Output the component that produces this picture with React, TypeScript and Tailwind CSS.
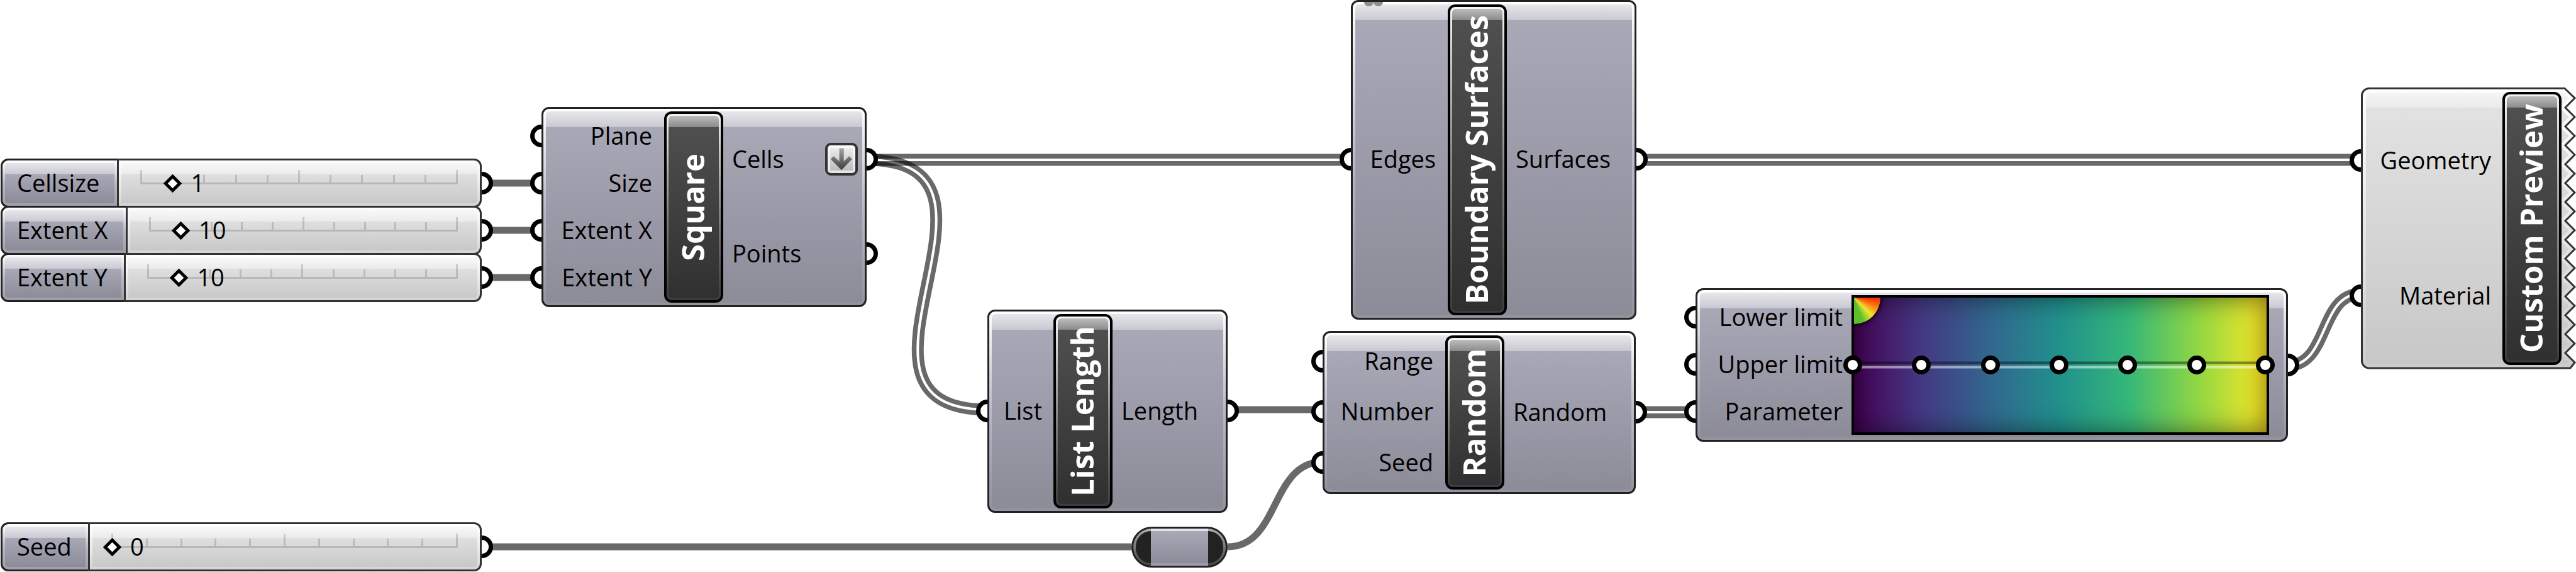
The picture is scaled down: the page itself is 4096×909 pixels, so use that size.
import { useId, useState, type ReactNode } from "react";

const ROW_TEXT = "pb-[2px] text-[38px] leading-none whitespace-nowrap text-black";

/* Half-round connector that sits against the edge of a node. */
function Grip({ side }: { side: "in" | "out" }) {
  return side === "in" ? (
    <span className="absolute top-1/2 right-full mr-[7px] h-[36px] w-[18px] -translate-y-1/2 rounded-l-full border-[7px] border-r-0 border-black bg-white" />
  ) : (
    <span className="absolute top-1/2 left-full ml-[7px] h-[36px] w-[18px] -translate-y-1/2 rounded-r-full border-[7px] border-l-0 border-black bg-white" />
  );
}

function Inputs({ names, className }: { names: string[]; className: string }) {
  return (
    <ul className={`flex flex-col pt-[1px] pb-[3px] ${className}`}>
      {names.map((name) => (
        <li key={name} className="relative flex flex-1 items-center justify-end">
          <Grip side="in" />
          <span className={ROW_TEXT}>{name}</span>
        </li>
      ))}
    </ul>
  );
}

function Outputs({ names, action }: { names: string[]; action?: ReactNode }) {
  return (
    <ul className="flex flex-1 flex-col pt-[1px] pb-[3px]">
      {names.map((name, i) => (
        <li key={name} className="relative flex flex-1 items-center justify-between pr-[7px] pl-[14px]">
          <span className={ROW_TEXT}>{name}</span>
          {i === 0 && action}
          <Grip side="out" />
        </li>
      ))}
    </ul>
  );
}

function Title({ children }: { children: string }) {
  return (
    <h2 className="flex w-[94px] shrink-0 rounded-[12px] border-4 border-black bg-linear-to-b from-[#f4f4f4] via-[#8a8a8a] to-[#3c3c3c] p-[3px]">
      <span className="flex flex-1 items-center justify-center rounded-[6px] bg-[linear-gradient(#bdbdbd,#8a8a8a_18px,#4f4f4f_18px,#303030)] pr-[3px]">
        <span className="rotate-180 font-bold whitespace-nowrap text-white text-[49px] leading-none [writing-mode:vertical-rl]">
          {children}
        </span>
      </span>
    </h2>
  );
}

function Node({ place, children }: { place: string; children: ReactNode }) {
  return (
    <section
      className={`absolute flex rounded-[12px] border-[3px] border-[#222] bg-linear-to-b from-white via-[#b9b8c5] to-[#93929f] p-[4px] ${place}`}
    >
      <div className="flex flex-1 rounded-[6px] bg-[linear-gradient(#e6e6eb,#c9c9d2_25px,#a9a8b7_25px,#8c8b98)]">
        {children}
      </div>
    </section>
  );
}

function FlattenButton() {
  return (
    <button
      type="button"
      aria-label="Flatten"
      className="h-[52px] w-[52px] rounded-[9px] border-4 border-[#333] bg-linear-to-b from-[#fafafa] to-[#e4e4e4] p-[4px]"
    >
      <svg viewBox="72 82 124 126" className="block h-full w-full bg-linear-to-b from-[#ececec] to-[#bcbcbc]">
        <defs>
          <linearGradient id="arrow" x1="0" y1="0" x2="0" y2="1">
            <stop offset="0" stopColor="#a2a2a2" />
            <stop offset="1" stopColor="#3c3c3c" />
          </linearGradient>
        </defs>
        <path d="M122 85H147V157L176 128L193 145L134 205L74 145L90 128L122 157Z" fill="url(#arrow)" />
      </svg>
    </button>
  );
}

type SliderProps = { name: string; initial: number; max: number; labelWidth: string };

function NumberSlider({ name, initial, max, labelWidth }: SliderProps) {
  const id = useId();
  const [value, setValue] = useState(initial);
  return (
    <div className="relative -mt-[3px] flex h-[78px]">
      <span className="absolute top-1/2 left-full h-[36px] w-[18px] -translate-y-1/2 rounded-r-full border-[7px] border-l-0 border-black bg-white" />
      <label
        htmlFor={id}
        className={`flex rounded-l-[12px] border-[3px] border-[#222] bg-linear-to-b from-white via-[#b9b8c5] to-[#9f9eab] p-[4px] ${labelWidth}`}
      >
        <span className={`flex flex-1 items-center rounded-l-[5px] bg-[linear-gradient(#e6e6eb,#c9c9d2_18px,#a9a8b7_18px,#8c8b98)] pl-[19px] ${ROW_TEXT}`}>
          {name}
        </span>
      </label>
      <div className="-ml-[3px] flex flex-1 rounded-r-[12px] border-[3px] border-[#333] bg-linear-to-b from-white via-[#ececec] to-[#d4d4d4] p-[4px]">
        <div className="flex flex-1 items-center rounded-r-[5px] bg-[linear-gradient(#f8f8f8,#ebebeb_18px,#dfdfdf_18px,#c8c8c8)] pr-[31px] pl-[30px]">
          <div className="relative h-[42px] flex-1">
            <div className="absolute inset-x-0 top-0 flex h-[23px] items-end justify-between border-b-[3px] border-black/15">
              {Array.from({ length: 11 }, (_, i) => (
                <span key={i} className={i % 5 === 0 ? "h-[20px] w-[3px] bg-black/15" : "h-[12px] w-[3px] bg-black/15"} />
              ))}
            </div>
            <input
              id={id}
              type="range"
              min={0}
              max={max}
              value={value}
              onChange={(e) => setValue(Number(e.target.value))}
              className="absolute top-0 -left-[9px] h-full w-[calc(100%+18px)] appearance-none bg-transparent [&::-webkit-slider-thumb]:h-[21px] [&::-webkit-slider-thumb]:w-[21px] [&::-webkit-slider-thumb]:rotate-45 [&::-webkit-slider-thumb]:appearance-none [&::-webkit-slider-thumb]:border-[5px] [&::-webkit-slider-thumb]:border-black [&::-webkit-slider-thumb]:bg-white"
            />
            <output
              htmlFor={id}
              style={{ left: `${(value / max) * 100}%` }}
              className={`pointer-events-none absolute top-0 flex h-full items-center pl-[30px] ${ROW_TEXT}`}
            >
              {value}
            </output>
          </div>
        </div>
      </div>
    </div>
  );
}

const SINGLE_WIRES = [
  "M783 291H861",
  "M783 366H861",
  "M783 441H861",
  "M1952 651H2103",
  "M783 869H1799",
  "M1952 869C2035 869 2020 734 2103 734",
];

const DOUBLE_WIRES = [
  "M1378 254H2148",
  "M1378 254C1652 254 1296 651 1570 651",
  "M2602 254H3754",
  "M2602 655H2696",
  "M3637 581C3704 581 3687 467 3754 467",
];

function Wires() {
  return (
    <svg className="absolute inset-0 h-full w-full" fill="none" stroke="black" strokeOpacity="0.59" aria-hidden="true">
      {SINGLE_WIRES.map((d) => (
        <path key={d} d={d} strokeWidth="11" />
      ))}
      {DOUBLE_WIRES.map((d, i) => (
        <g key={d}>
          <mask id={`core${i}`} maskUnits="userSpaceOnUse" x="0" y="0" width="4096" height="909">
            <rect width="4096" height="909" fill="white" stroke="none" />
            <path d={d} stroke="black" strokeOpacity="1" strokeWidth="4" />
          </mask>
          <path d={d} strokeWidth="19" mask={`url(#core${i})`} />
        </g>
      ))}
    </svg>
  );
}

function GradientBar() {
  return (
    <div className="relative mt-[4px] h-[222px] w-[664px] border-4 border-black bg-[linear-gradient(to_right,#440154,#443983_16.6%,#31688e_33.3%,#21918c_50%,#35b779_66.6%,#90d743_83.3%,#fde725)]">
      <div className="absolute inset-0 overflow-hidden">
        <div className="absolute inset-0 shadow-[inset_0_0_40px_rgb(0_0_0/0.55)]" />
        <div className="absolute top-0 left-0 h-[42px] w-[42px] rounded-br-full bg-[conic-gradient(from_90deg_at_0_0,#f22a0a,#fb7a12_22deg,#eee52f_45deg,#5cc02a_70deg,#2bb070)] shadow-[0_0_7px_2px_rgb(0_0_0/0.9)]" />
      </div>
      <div className="absolute inset-x-0 top-1/2 h-[11px] -translate-y-1/2 border-t-4 border-b-4 border-t-black/40 border-b-white/50" />
      <div className="absolute top-1/2 right-[-13px] left-[-17px] flex -translate-y-1/2 justify-between">
        {Array.from({ length: 7 }, (_, i) => (
          <button
            key={i}
            type="button"
            aria-label={`Gradient stop ${i + 1}`}
            className="h-[30px] w-[30px] rounded-full border-[7px] border-black bg-white"
          />
        ))}
      </div>
    </div>
  );
}

const TEETH = Array.from({ length: 15 }, (_, k) => `L340 ${17 + 30 * k}${k < 14 ? `L325 ${32 + 30 * k}` : ""}`).join("");
const TORN_OUTLINE = `M13 1.5H324${TEETH}L333 446H13A11.5 11.5 0 0 1 1.5 434.5V13A11.5 11.5 0 0 1 13 1.5Z`;

function CustomPreview() {
  return (
    <section className="absolute top-[139px] left-[3754px] flex h-[448px] w-[342px] p-[7px]">
      <svg viewBox="0 0 342 448" className="absolute inset-0 h-full w-full" aria-hidden="true">
        <defs>
          <linearGradient id="sheet" x1="0" y1="0" x2="0" y2="1">
            <stop offset="0" stopColor="#e4e4e4" />
            <stop offset="1" stopColor="#c7c7c7" />
          </linearGradient>
          <linearGradient id="gloss" x1="0" y1="0" x2="0" y2="1">
            <stop offset="0" stopColor="#f8f8f8" />
            <stop offset="1" stopColor="#ebebeb" />
          </linearGradient>
          <linearGradient id="rim" x1="0" y1="0" x2="0" y2="448" gradientUnits="userSpaceOnUse">
            <stop offset="0" stopColor="#ffffff" />
            <stop offset="0.5" stopColor="#e6e6e6" />
            <stop offset="1" stopColor="#cccccc" />
          </linearGradient>
          <clipPath id="torn">
            <path d={TORN_OUTLINE} />
          </clipPath>
        </defs>
        <g clipPath="url(#torn)">
          <rect width="342" height="448" fill="url(#sheet)" />
          <rect width="342" height="32" fill="url(#gloss)" />
          <path d={TORN_OUTLINE} fill="none" stroke="url(#rim)" strokeWidth="13" />
        </g>
        <path d={TORN_OUTLINE} fill="none" stroke="#333" strokeWidth="3" />
      </svg>
      <div className="relative flex">
        <Inputs names={["Geometry", "Material"]} className="w-[218px] pr-[18px]" />
        <Title>Custom Preview</Title>
      </div>
    </section>
  );
}

export default function App() {
  return (
    <main className="relative h-screen w-full overflow-hidden bg-white font-['Open_Sans','Noto_Sans',sans-serif]">
      <Wires />

      <div className="absolute top-[255px] left-px flex w-[765px] flex-col">
        <NumberSlider name="Cellsize" initial={1} max={10} labelWidth="w-[188px]" />
        <NumberSlider name="Extent X" initial={10} max={100} labelWidth="w-[202px]" />
        <NumberSlider name="Extent Y" initial={10} max={100} labelWidth="w-[199px]" />
      </div>
      <div className="absolute top-[833px] left-px flex w-[765px] flex-col">
        <NumberSlider name="Seed" initial={0} max={10} labelWidth="w-[142px]" />
      </div>

      <Node place="left-[861px] top-[170px] h-[318px] w-[517px]">
        <Inputs names={["Plane", "Size", "Extent X", "Extent Y"]} className="w-[188px] pr-[19px]" />
        <Title>Square</Title>
        <Outputs names={["Cells", "Points"]} action={<FlattenButton />} />
      </Node>

      <Node place="left-[2148px] top-0 h-[508px] w-[454px]">
        <span className="absolute top-0 left-[18px] flex">
          <span className="h-[7px] w-[15px] rounded-b-full bg-[#8e8e90]" />
          <span className="h-[7px] w-[15px] rounded-b-full bg-[#8e8e90]" />
        </span>
        <Inputs names={["Edges"]} className="w-[147px] pr-[19px]" />
        <Title>Boundary Surfaces</Title>
        <Outputs names={["Surfaces"]} />
      </Node>

      <Node place="left-[1570px] top-[492px] h-[323px] w-[382px]">
        <Inputs names={["List"]} className="w-[98px] pr-[18px]" />
        <Title>List Length</Title>
        <Outputs names={["Length"]} />
      </Node>

      <Node place="left-[2103px] top-[526px] h-[259px] w-[498px]">
        <Inputs names={["Range", "Number", "Seed"]} className="w-[188px] pr-[19px]" />
        <Title>Random</Title>
        <Outputs names={["Random"]} />
      </Node>

      <Node place="left-[2696px] top-[458px] h-[244px] w-[942px]">
        <Inputs names={["Lower limit", "Upper limit", "Parameter"]} className="w-[241px] pr-[14px]" />
        <GradientBar />
        <div className="relative flex-1">
          <Grip side="out" />
        </div>
      </Node>

      <CustomPreview />

      <div className="absolute top-[837px] left-[1799px] flex h-[65px] w-[153px] rounded-full border-[3px] border-[#222] bg-linear-to-b from-[#b0b0b0] via-[#777] to-[#444]">
        <span className="my-[4px] ml-[4px] flex-1 rounded-l-full bg-[#222]" />
        <span className="w-[91px] border-y-4 border-t-[#e4e4ea] border-b-[#9b9aa7] bg-linear-to-b from-[#a9a8b7] to-[#8c8b98]" />
        <span className="my-[4px] mr-[4px] flex-1 rounded-r-full bg-[#222]" />
      </div>
    </main>
  );
}
